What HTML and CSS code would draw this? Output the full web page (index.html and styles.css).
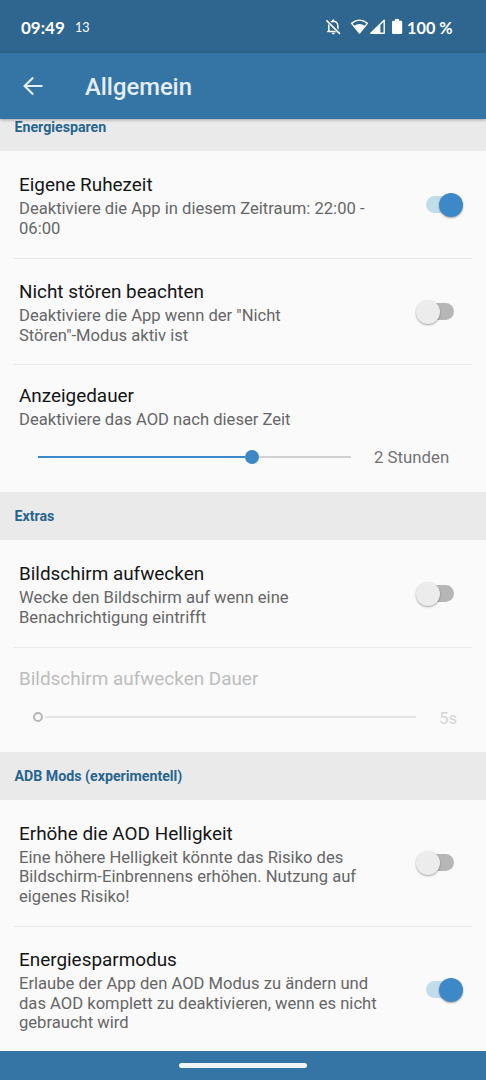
FILE: index.html
```
<!DOCTYPE html>
<html lang="de">
<head>
    <meta charset="UTF-8">
    <meta name="viewport" content="width=device-width, initial-scale=1.0">
    <title>Allgemein</title>
    <link rel="stylesheet" href="styles.css">
</head>
<body>
    <div class="statusbar">
        <span class="time">09:49</span>
        <span class="date">13</span>
        <svg class="status-icons" width="80" height="20" viewBox="0 0 80 20">
            <!-- Benachrichtigungen aus -->
            <path d="M3.8 14.3V8.5Q4 4.7 8.3 4.3Q12.6 4.7 12.8 8.5V14.3M2.2 14.4H14.4" fill="none" stroke="#fff" stroke-width="1.5"/>
            <path d="M7.3 2.4h2v2h-2zM6.7 15.8h3.2q-.3 1.6-1.6 1.6t-1.6-1.6z" fill="#fff"/>
            <path d="M2.4 3.9L15.5 17" stroke="#2f668f" stroke-width="3.4"/>
            <path d="M1.4 3.4L14.9 16.9" stroke="#fff" stroke-width="1.5"/>
            <!-- WLAN -->
            <path d="M26.6 6.4Q34.5-.1 42.4 6.4L34.5 16z" fill="none" stroke="#fff" stroke-width="1.4" stroke-linejoin="round"/>
            <path d="M29.2 8.8Q34.5 5.4 39.8 8.8L34.5 16z" fill="#fff"/>
            <!-- Mobilfunk -->
            <path d="M45.8 16.3L59.2 3.2V16.3z" fill="none" stroke="#fff" stroke-width="1.4" stroke-linejoin="round"/>
            <path d="M45.8 16.5L55.4 7V16.5z" fill="#fff"/>
            <!-- Akku -->
            <path d="M70 2h4v1.8h2q1.2 0 1.2 1.2v10.8q0 1.2-1.2 1.2h-7.8q-1.2 0-1.2-1.2V5q0-1.2 1.2-1.2h1.8z" fill="#fff"/>
        </svg>
        <span class="battery">100 %</span>
    </div>

    <header class="toolbar">
        <svg class="back" width="20" height="20" viewBox="0 0 20 20">
            <path d="M19.5 10H1.8M10.2 1.4L1.6 10L10.2 18.6" fill="none" stroke="#e6eef5" stroke-width="2.1"/>
        </svg>
        <h1>Allgemein</h1>
    </header>

    <main class="settings">
        <h2 class="category first">Energiesparen</h2>
        <div class="pref">
            <div class="text">
                <h3>Eigene Ruhezeit</h3>
                <p>Deaktiviere die App in diesem Zeitraum: 22:00 -<br>06:00</p>
            </div>
            <span class="switch on"></span>
        </div>
        <div class="pref">
            <div class="text">
                <h3>Nicht stören beachten</h3>
                <p>Deaktiviere die App wenn der "Nicht<br>Stören"-Modus aktiv ist</p>
            </div>
            <span class="switch"></span>
        </div>
        <div class="pref-slider duration">
            <h3>Anzeigedauer</h3>
            <p>Deaktiviere das AOD nach dieser Zeit</p>
            <div class="slider">
                <span class="filled"></span>
                <span class="thumb"></span>
                <span class="track"></span>
                <span class="value">2 Stunden</span>
            </div>
        </div>

        <h2 class="category">Extras</h2>
        <div class="pref">
            <div class="text">
                <h3>Bildschirm aufwecken</h3>
                <p>Wecke den Bildschirm auf wenn eine<br>Benachrichtigung eintrifft</p>
            </div>
            <span class="switch"></span>
        </div>
        <div class="pref-slider disabled">
            <h3>Bildschirm aufwecken Dauer</h3>
            <div class="slider">
                <span class="thumb"></span>
                <span class="track"></span>
                <span class="value">5s</span>
            </div>
        </div>

        <h2 class="category">ADB Mods (experimentell)</h2>
        <div class="pref tall">
            <div class="text">
                <h3>Erhöhe die AOD Helligkeit</h3>
                <p>Eine höhere Helligkeit könnte das Risiko des<br>Bildschirm-Einbrennens erhöhen. Nutzung auf<br>eigenes Risiko!</p>
            </div>
            <span class="switch"></span>
        </div>
        <div class="pref tall">
            <div class="text">
                <h3>Energiesparmodus</h3>
                <p>Erlaube der App den AOD Modus zu ändern und<br>das AOD komplett zu deaktivieren, wenn es nicht<br>gebraucht wird</p>
            </div>
            <span class="switch on"></span>
        </div>
    </main>

    <nav class="navbar"><span class="handle"></span></nav>
</body>
</html>
```
FILE: styles.css
```
* {
    box-sizing: border-box;
}

body {
    display: flex;
    flex-direction: column;
    width: 486px;
    height: 1080px;
    margin: 0;
    overflow: hidden;
    font-family: Roboto, sans-serif;
    background-color: #fafafa;
}

h1, h2, h3, p {
    margin: 0;
}

/* Statusleiste */
.statusbar {
    display: flex;
    align-items: center;
    flex: none;
    height: 53px;
    padding: 1px 33px 0 21px;
    background-color: #2f668f;
    color: #fff;
    font-family: Lato, sans-serif;
}

.time {
    width: 54px;
    font-size: 17px;
    font-weight: bold;
}

.date {
    font-size: 12.6px;
}

.status-icons {
    margin-left: auto;
    margin-right: 2px;
}

.battery {
    width: 46px;
    font-size: 16.3px;
    font-weight: bold;
    white-space: nowrap;
}

.toolbar {
    display: flex;
    align-items: center;
    flex: none;
    position: relative;
    height: 66px;
    padding-left: 23px;
    background-color: #3575a6;
    box-shadow: 0 1px 3px rgba(0, 0, 0, 0.3);
}

.toolbar h1 {
    margin-left: 42px;
    padding-top: 2px;
    color: #e6eef5;
    font-size: 23.8px;
    font-weight: 500;
}

/* Einstellungen */
.settings {
    flex: 1;
    overflow: hidden;
}

.category {
    height: 48px;
    padding-left: 14.5px;
    background-color: #eaeaea;
    color: #266490;
    font-size: 14.2px;
    font-weight: bold;
    line-height: 49px;
}

.category.first {
    margin-top: -16px;
}

.pref {
    display: flex;
    align-items: center;
    justify-content: space-between;
    height: 107px;
    margin: 0 14px;
    padding: 0 18px 0 5px;
}

.pref.tall {
    height: 126px;
}

.pref + .pref,
.pref + .pref-slider {
    border-top: 1px solid #e8e8e8;
}

.pref + .pref:not(.tall) {
    height: 106px;
}

h3 {
    color: #151515;
    font-size: 18.9px;
    font-weight: 400;
    line-height: 26px;
}

p {
    color: #666;
    font-size: 16.6px;
    line-height: 19.5px;
    white-space: nowrap;
}

.text {
    padding-top: 1px;
}

.text p {
    padding-top: 1px;
}

.switch {
    position: relative;
    flex: none;
    width: 38px;
    height: 24px;
}

.switch::before {
    content: "";
    position: absolute;
    left: 4px;
    top: 3px;
    width: 34px;
    height: 17px;
    border-radius: 9px;
    background-color: #b6b6b6;
}

.switch::after {
    content: "";
    position: absolute;
    left: 0;
    top: 0;
    width: 24px;
    height: 24px;
    border-radius: 50%;
    background-color: #ececec;
    box-shadow: 0 1px 2px rgba(0, 0, 0, 0.35);
}

.switch.on::before {
    left: 10px;
    background-color: #c3dcec;
}

.switch.on::after {
    left: 23px;
    background-color: #3d88c6;
}

.pref-slider {
    height: 105px;
    margin: 0 14px;
    padding: 18px 0 0 5px;
}

.pref-slider.duration {
    height: 128px;
}

.duration p {
    padding-top: 1px;
}

.slider {
    display: flex;
    align-items: center;
    height: 20px;
    margin-top: 17px;
    padding-left: 19px;
}

.filled {
    width: 207px;
    height: 2px;
    background-color: #3d88c6;
}

.thumb {
    width: 14px;
    height: 14px;
    border-radius: 50%;
    background-color: #3d88c6;
}

.track {
    width: 92px;
    height: 2px;
    background-color: #d0d0d0;
}

.value {
    margin-left: 23px;
    padding-top: 1px;
    color: #727272;
    font-size: 16.8px;
}

.disabled h3 {
    color: #bdbdbd;
}

.disabled .slider {
    margin-top: 15px;
    padding-left: 14px;
}

.disabled .thumb {
    width: 10px;
    height: 10px;
    margin-right: 2px;
    border: 2px solid #b5b5b5;
    background-color: transparent;
}

.disabled .track {
    width: 371px;
    background-color: #e5e5e5;
}

.disabled .value {
    color: #d5d5d5;
}

.navbar {
    display: flex;
    align-items: center;
    justify-content: center;
    flex: none;
    height: 29px;
    background-color: #3575a6;
}

.handle {
    width: 128px;
    height: 5px;
    border-radius: 3px;
    background-color: #f0f3f8;
}
```
